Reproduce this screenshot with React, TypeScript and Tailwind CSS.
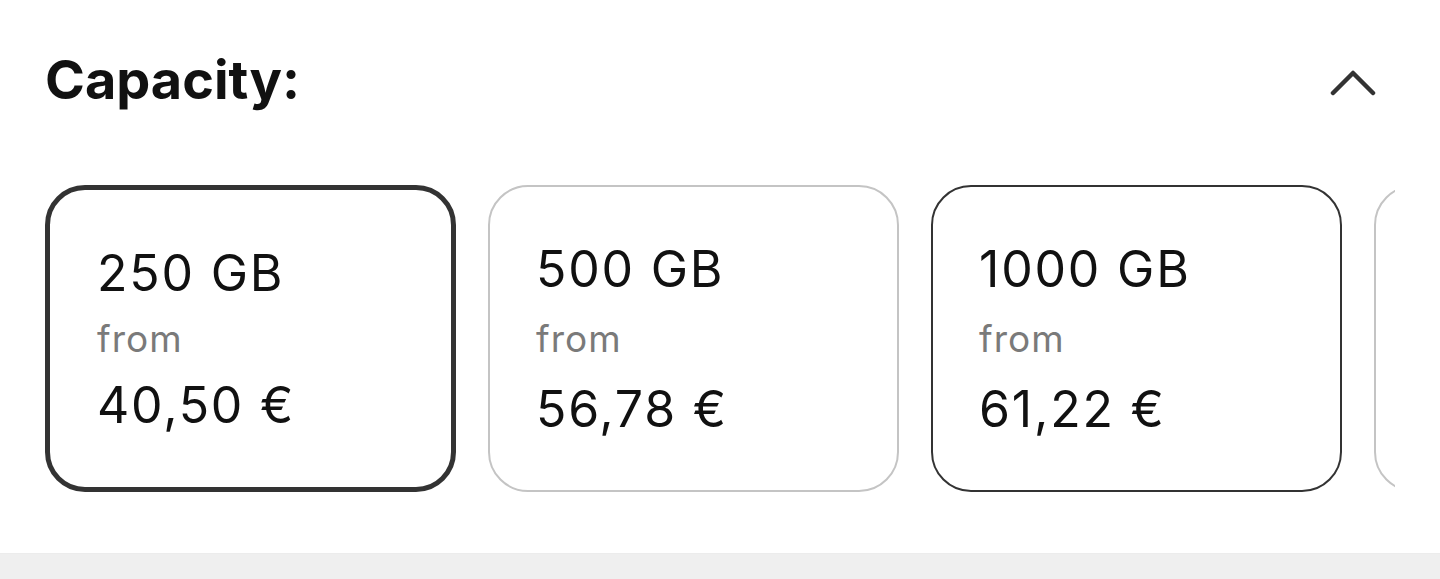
import React, { useState } from "react";

interface Option {
    size: string;
    price: string;
    tone: "selected" | "dark" | "light";
}

const options: Option[] = [
    { size: "250 GB", price: "40,50 €", tone: "selected" },
    { size: "500 GB", price: "56,78 €", tone: "light" },
    { size: "1000 GB", price: "61,22 €", tone: "dark" },
];

function CapacityCard({ option }: { option: Option }) {
    const border =
        option.tone === "selected"
            ? "border-[5px] border-[#333333] pl-[47px] gap-[17px]"
            : option.tone === "dark"
            ? "border-2 border-[#333333] pl-[46px] gap-[21px]"
            : "border-2 border-[#c4c4c4] pl-[46px] gap-[21px]";

    return (
        <div className={`w-[411px] h-[307px] shrink-0 rounded-[40px] bg-white flex flex-col justify-center ${border}`}>
            <span className="text-[50px] leading-[56px] tracking-[1.8px] text-[#111111]">{option.size}</span>
            <span className="text-[37px] leading-[42px] tracking-[1px] text-[#7a7a7a]">from</span>
            <span className="text-[50px] leading-[56px] tracking-[1.8px] text-[#111111]">{option.price}</span>
        </div>
    );
}

export default function App() {
    const [open, setOpen] = useState(true);

    return (
        <div className="w-[1440px] h-[579px] bg-white flex flex-col overflow-hidden" style={{ fontFamily: "Inter, 'Open Sans', sans-serif" }}>
            {/* Header */}
            <div className="flex items-center justify-between pl-[45px] pr-[62px] pt-[48px] h-[136px]">
                <h2 className="text-[54px] leading-[64px] font-bold text-[#111111] -mt-[24px]">Capacity:</h2>
                <button onClick={() => setOpen(!open)} className="w-[50px] h-[30px] flex items-center justify-center -mt-[18px]">
                    <svg width="46" height="26" viewBox="0 0 46 26" fill="none">
                        <path d="M3 23 L23 3 L43 23" stroke="#333333" strokeWidth="4.5" strokeLinecap="round" strokeLinejoin="round" />
                    </svg>
                </button>
            </div>

            {/* Cards */}
            <div className="flex gap-[32px] overflow-hidden ml-[45px] mr-[45px] mt-[49px]">
                {options.map((o) => (
                    <CapacityCard key={o.size} option={o} />
                ))}
                {/* next card peeking in at the edge */}
                <div className="w-[411px] h-[307px] shrink-0 rounded-[40px] border-2 border-[#c4c4c4] bg-white" />
            </div>

            <div className="flex-1" />
            <div className="h-[26px] bg-[#efefef] border-t border-[#ececec]" />
        </div>
    );
}
